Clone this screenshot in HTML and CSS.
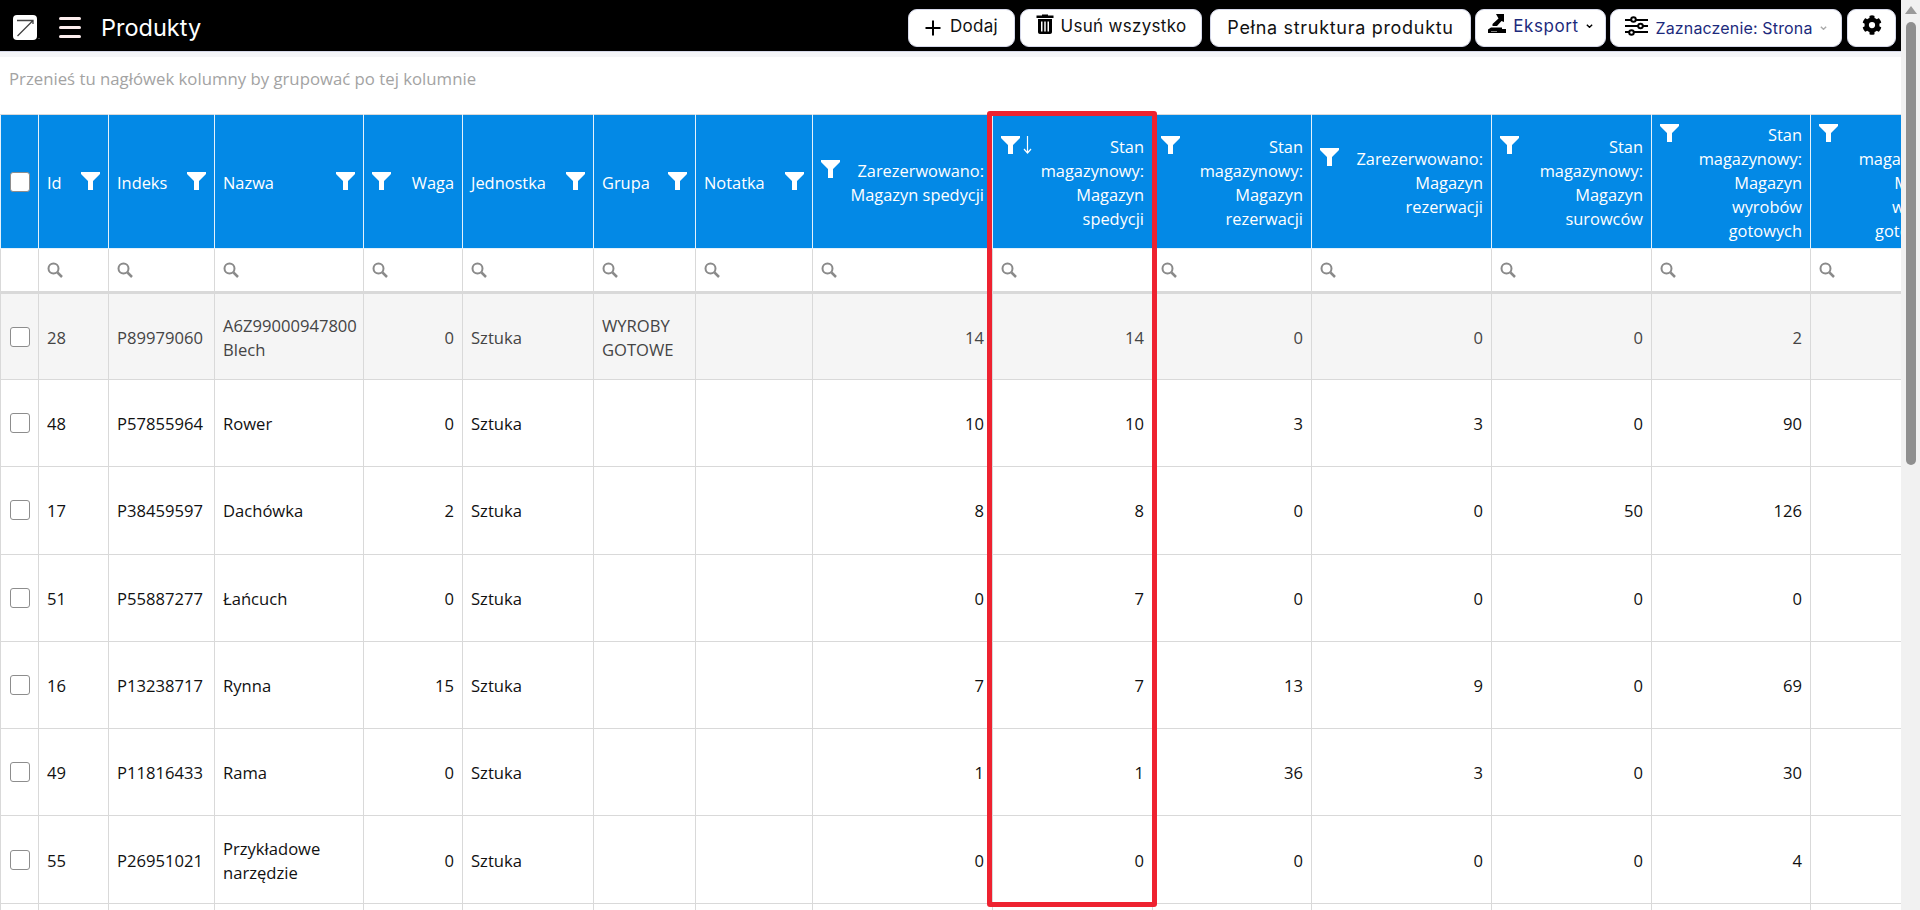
FILE: index.html
```html
<!DOCTYPE html>
<html>
<head>
    <title>Produkty</title>
    <meta name="viewport" content="width=device-width, initial-scale=1.0">
    <link rel="stylesheet" href="styles.css">
</head>

<body>
    <div class="page">
        <div class="main">
            <header class="topbar">
                <svg class="logo" viewBox="0 0 28 26" width="28" height="26">
                    <rect x="0" y="0" width="24" height="25" rx="4" fill="#fff"/>
                    <path d="M4 5.5H20V9M20 5.5L4.5 21" fill="none" stroke="#444" stroke-width="1.3"/>
                    <circle cx="26" cy="23.5" r="0.6" fill="#888"/>
                </svg>
                <div class="burger"><span></span><span></span><span></span></div>
                <h1 class="title">Produkty</h1>
                <div class="actions">
                    <button class="btn btn-add">
                        <svg viewBox="0 0 16 16" width="16" height="16"><path d="M8 0.5V15.5M0.5 8H15.5" stroke="#000" stroke-width="2" fill="none"/></svg>
                        <span class="label">Dodaj</span>
                    </button>
                    <button class="btn btn-del">
                        <svg class="icon-trash" viewBox="0 0 18 20" width="18" height="20"><path d="M6 1.5V0.5H12V1.5H17.5V4H0.5V1.5ZM2 5H16V18C16 19 15.200 20 14 20H4C2.800 20 2 19 2 18ZM5 7.500V17.500H6.500V7.500ZM8.250 7.500V17.500H9.750V7.500ZM11.500 7.500V17.500H13V7.500Z" fill="#000" fill-rule="evenodd"/></svg>
                        <span class="label">Usuń wszystko</span>
                    </button>
                    <button class="btn btn-full"><span>Pełna struktura produktu</span></button>
                    <button class="btn btn-export">
                        <svg class="icon-export" viewBox="0 0 18 19" width="18" height="19"><path d="M0 19V15.500L3 13.500H14V15H18V19ZM3 17V17.500H9V17Z" fill="#000" fill-rule="evenodd"/><path d="M8 0H16V8L13.500 7L9 12H4.500V10L10.500 4.500Z" fill="#000"/></svg>
                        <span class="label">Eksport</span>
                        <svg class="chev" viewBox="0 0 10 6" width="7" height="4"><path d="M1 1L5 5L9 1" fill="none" stroke="#000" stroke-width="2"/></svg>
                    </button>
                    <button class="btn btn-select">
                        <svg class="icon-sliders" viewBox="0 0 23 20" width="23" height="20" fill="none" stroke="#000" stroke-width="2"><path d="M0 4H6M11 4H23M0 10H13M18 10H23M0 16H4M9 16H23"/><circle cx="8.500" cy="3.500" r="2.300"/><circle cx="15.500" cy="10" r="2.300"/><circle cx="6.500" cy="16.500" r="2.300"/></svg>
                        <span>Zaznaczenie: Strona</span>
                        <svg viewBox="0 0 10 6" width="7" height="4"><path d="M1 1L5 5L9 1" fill="none" stroke="#aaa" stroke-width="2"/></svg>
                    </button>
                    <button class="btn btn-gear">
                        <svg class="icon-gear" viewBox="0 0 512 512" width="20" height="20"><path fill="#000" d="M487 315l-43-25a196 196 0 0 0 0-68l43-25c5-3 7-9 5-14-11-36-30-68-55-95-4-4-10-5-15-2l-43 25a191 191 0 0 0-59-34V27c0-6-4-10-9-11a198 198 0 0 0-110 0c-5 1-9 5-9 11v50a195 195 0 0 0-59 34L90 86c-5-3-11-2-15 2-25 27-44 59-55 95-2 5 0 11 5 14l43 25a196 196 0 0 0 0 68l-43 25c-5 3-7 9-5 14 11 36 30 68 55 95 4 4 10 5 15 2l43-25c17 15 37 26 59 34v50c0 6 4 10 9 11a198 198 0 0 0 110 0c5-1 9-5 9-11v-50c22-8 42-19 59-34l43 25c5 3 11 2 15-2 25-27 44-59 55-95 2-5 0-11-5-14zM256 336a80 80 0 1 1 0-160 80 80 0 0 1 0 160z"/></svg>
                    </button>
                </div>
            </header>

            <div class="group-panel">Przenieś tu nagłówek kolumny by grupować po tej kolumnie</div>

            <div class="grid-wrap">
                <table class="grid">
                    <colgroup id="cols"></colgroup>
                    <thead id="head"></thead>
                    <tbody id="body"></tbody>
                </table>
            </div>

            <div class="highlight"></div>
        </div>

        <div class="scrollbar">
            <div class="scroll-up"></div>
            <div class="scroll-thumb"></div>
        </div>
    </div>

    <script src="app.js"></script>
</body>
</html>
```

FILE: styles.css
```css
* {
    box-sizing: border-box;
}

html, body {
    margin: 0;
    height: 100%;
    overflow: hidden;
}

body {
    font-family: "Open Sans", "Noto Sans", sans-serif;
    font-size: 16.6px;
    color: #111;
    background-color: white;
}

.page {
    display: flex;
    height: 910px;
}

.main {
    position: relative;
    width: 1901px;
    overflow: hidden;
}

/* top bar */
.topbar {
    display: flex;
    align-items: center;
    height: 57px;
    padding: 3px 5px 0 13px;
    background-color: black;
    background-clip: padding-box;
    border-bottom: 5px solid #f4f5f8;
    box-shadow: inset 0 -1px 0 #d6d9ea;
}

.logo {
    flex: none;
}

.burger {
    display: flex;
    flex-direction: column;
    gap: 6px;
    width: 22px;
    margin-left: 18px;
}

.burger span {
    height: 3px;
    border-radius: 2px;
    background-color: #fdeeee;
}

.title {
    margin: 0 0 0 20px;
    font-family: Inter, sans-serif;
    font-size: 23.500px;
    font-weight: 400;
    color: white;
}

.actions {
    display: flex;
    align-items: center;
    margin-left: auto;
}

.btn {
    display: flex;
    align-items: center;
    justify-content: center;
    gap: 7px;
    height: 38px;
    padding: 0;
    border: 1px solid #d6d9ea;
    border-radius: 9px;
    background-color: white;
    font-family: Inter, sans-serif;
    font-size: 17px;
    letter-spacing: 0.3px;
    color: #111;
}

.btn .label {
    margin-bottom: 3px;
}

.btn-add {
    width: 107px;
    gap: 9px;
}

.btn-del {
    width: 182px;
    margin-left: 5px;
}

.icon-trash {
    margin-bottom: 7px;
}

.btn-full {
    width: 261px;
    margin-left: 8px;
    font-size: 18px;
    letter-spacing: 0.7px;
}

.btn-export {
    width: 131px;
    margin-left: 4px;
    letter-spacing: 0.6px;
    color: #1c2a7c;
}

.icon-export {
    margin-bottom: 8px;
}

.chev {
    margin-bottom: 4px;
}

.btn-select {
    width: 232px;
    margin-left: 4px;
    font-size: 16px;
    letter-spacing: 0.15px;
    color: #1c2a7c;
}

.icon-sliders {
    margin-bottom: 3px;
}

.btn-gear {
    width: 49px;
    margin-left: 5px;
}

.icon-gear {
    margin-bottom: 5px;
}

/* group panel */
.group-panel {
    height: 57px;
    padding: 10px 0 0 9px;
    font-size: 16.750px;
    color: #a3a3a3;
}

/* table */
.grid-wrap {
    overflow: hidden;
}

.grid {
    table-layout: fixed;
    width: 1970px;
    border-collapse: collapse;
}

.grid th, .grid td {
    border: 1px solid #d9d9d9;
    padding: 0 8px;
    font-weight: 400;
    line-height: 24px;
}

.head-row th {
    height: 134px;
    padding-top: 3px;
    font-size: 16.400px;
    background-color: #0389e6;
    border-color: #e4f1fb;
    border-top-color: #d9d9d9;
    color: white;
    vertical-align: middle;
}

.head-inner {
    display: flex;
    align-items: flex-start;
    justify-content: space-between;
    gap: 6px;
    text-align: left;
}

.head-inner.num {
    flex-direction: row-reverse;
    text-align: right;
}

.filter-icon {
    display: flex;
    flex: none;
    gap: 3px;
    margin-top: 1px;
}

.check {
    display: block;
    width: 20px;
    height: 20px;
    margin: 0 auto;
    border: 1px solid #8d8d8d;
    border-radius: 3px;
    background-color: white;
}

.filter-row td {
    height: 44px;
    border-bottom: 3px solid #d9d9d9;
}

.search-icon {
    display: block;
}

.data-row td {
    height: 87.300px;
    padding-top: 2px;
    color: #111;
}

.data-row.alt td {
    height: 87px;
    background-color: #f5f5f5;
    color: #444;
}

.data-row td.num {
    text-align: right;
}

.data-row td.tail {
    height: 20px;
}

.grid th:first-child, .grid td:first-child {
    padding: 0;
}

.c0 { width: 38px; }
.c1 { width: 70px; }
.c2 { width: 106px; }
.c3 { width: 149px; }
.c4 { width: 99px; }
.c5 { width: 131px; }
.c6 { width: 102px; }
.c7 { width: 117px; }
.c8 { width: 180px; }
.c9 { width: 160px; }
.c10 { width: 159px; }
.c11 { width: 180px; }
.c12 { width: 160px; }
.c13 { width: 159px; }
.c14 { width: 160px; }

/* red frame around the sorted column */
.highlight {
    position: absolute;
    left: 987px;
    top: 111px;
    width: 170px;
    height: 796px;
    border: 5px solid #ee2230;
    border-radius: 3px;
}

/* page scrollbar */
.scrollbar {
    position: relative;
    flex: 1;
    background-color: #f1f1f1;
}

.scroll-up {
    position: absolute;
    left: 4px;
    top: 6px;
    border-left: 6px solid transparent;
    border-right: 6px solid transparent;
    border-bottom: 8px solid #9a9a9a;
}

.scroll-thumb {
    position: absolute;
    left: 5px;
    top: 22px;
    width: 10px;
    height: 443px;
    border-radius: 5px;
    background-color: #8f8f8f;
}
```

FILE: app.js
```js
const columns = [
    { title: "Id" },
    { title: "Indeks" },
    { title: "Nazwa" },
    { title: "Waga", num: true },
    { title: "Jednostka" },
    { title: "Grupa" },
    { title: "Notatka" },
    { title: "Zarezerwowano: Magazyn spedycji", num: true },
    { title: "Stan magazynowy: Magazyn spedycji", num: true, sorted: true },
    { title: "Stan magazynowy: Magazyn rezerwacji", num: true },
    { title: "Zarezerwowano: Magazyn rezerwacji", num: true },
    { title: "Stan magazynowy: Magazyn surowców", num: true },
    { title: "Stan magazynowy: Magazyn wyrobów gotowych", num: true },
    { title: "Stan magazynowy: Magazyn wyrobów gotowych 2", num: true }
];

const rows = [
    ["28", "P89979060", "A6Z99000947800 Blech", "0", "Sztuka", "WYROBY GOTOWE", "", "14", "14", "0", "0", "0", "2", ""],
    ["48", "P57855964", "Rower", "0", "Sztuka", "", "", "10", "10", "3", "3", "0", "90", ""],
    ["17", "P38459597", "Dachówka", "2", "Sztuka", "", "", "8", "8", "0", "0", "50", "126", ""],
    ["51", "P55887277", "Łańcuch", "0", "Sztuka", "", "", "0", "7", "0", "0", "0", "0", ""],
    ["16", "P13238717", "Rynna", "15", "Sztuka", "", "", "7", "7", "13", "9", "0", "69", ""],
    ["49", "P11816433", "Rama", "0", "Sztuka", "", "", "1", "1", "36", "3", "0", "30", ""],
    ["55", "P26951021", "Przykładowe narzędzie", "0", "Sztuka", "", "", "0", "0", "0", "0", "0", "4", ""]
];

const filterIcon = `<svg viewBox="0 0 19 18" width="19" height="18"><path d="M0 0H19V2L12 9V18H7V9L0 2Z" fill="#fff"/></svg>`;
const sortIcon = `<svg viewBox="0 0 9 18" width="9" height="18"><path d="M4.500 0V17M1 13L4.500 17L8 13" fill="none" stroke="#fff" stroke-width="1.200"/></svg>`;
const searchIcon = `<svg class="search-icon" viewBox="0 0 16 16" width="16" height="16"><circle cx="6.500" cy="6.500" r="5" fill="none" stroke="#8a8a8a" stroke-width="2"/><path d="M10.500 10.500L15 15" stroke="#8a8a8a" stroke-width="2.500"/></svg>`;

let cols = '<col class="c0">';
columns.forEach((col, i) => {
    cols += `<col class="c${i + 1}">`;
});
document.getElementById("cols").innerHTML = cols;

let head = '<tr class="head-row"><th><span class="check"></span></th>';
columns.forEach((col) => {
    head += `<th><div class="head-inner ${col.num ? "num" : ""}">
        <span>${col.title}</span>
        <span class="filter-icon">${filterIcon}${col.sorted ? sortIcon : ""}</span>
    </div></th>`;
});
head += '</tr><tr class="filter-row"><td></td>';
columns.forEach(() => {
    head += `<td>${searchIcon}</td>`;
});
head += "</tr>";
document.getElementById("head").innerHTML = head;

let body = "";
rows.forEach((row, r) => {
    body += `<tr class="data-row ${r === 0 ? "alt" : ""}"><td><span class="check"></span></td>`;
    row.forEach((value, i) => {
        body += `<td class="${columns[i].num ? "num" : ""}">${value}</td>`;
    });
    body += "</tr>";
});
body += '<tr class="data-row"><td class="tail"></td>';
columns.forEach(() => {
    body += '<td class="tail"></td>';
});
body += "</tr>";
document.getElementById("body").innerHTML = body;
```
